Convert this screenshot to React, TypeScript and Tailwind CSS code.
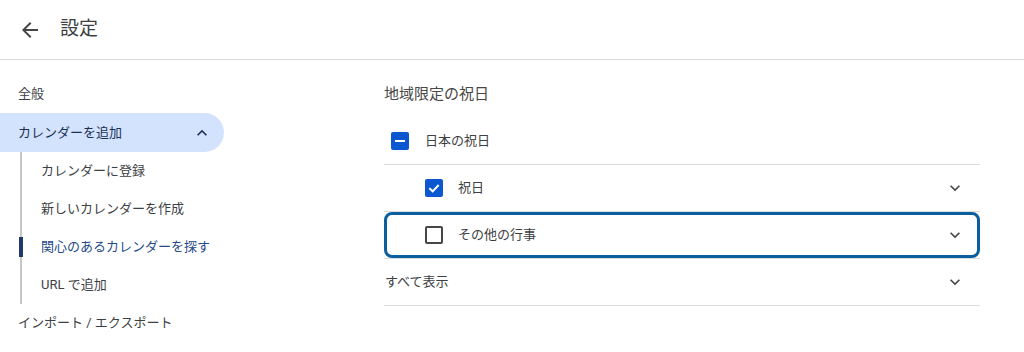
import { ReactNode } from "react"

const font = { fontFamily: 'Roboto, "Noto Sans CJK JP", sans-serif' }

function ExpandMore({ className = "" }: { className?: string }) {
  return (
    <svg viewBox="0 0 24 24" className={className} fill="currentColor">
      <path d="M16.59 8.59L12 13.17 7.41 8.59 6 10l6 6 6-6z" />
    </svg>
  )
}

function ExpandLess({ className = "" }: { className?: string }) {
  return (
    <svg viewBox="0 0 24 24" className={className} fill="currentColor">
      <path d="M12 8l-6 6 1.41 1.41L12 10.83l4.59 4.58L18 14z" />
    </svg>
  )
}

function Checkbox({ state }: { state: "checked" | "mixed" | "empty" }) {
  if (state === "empty") {
    return <div className="w-[18px] h-[18px] rounded-[2px] border-2 border-[#444746]" />
  }
  return (
    <div className="w-[18px] h-[18px] rounded-[2px] bg-[#0b57d0] flex items-center justify-center">
      {state === "mixed" ? (
        <div className="w-[10px] h-[2px] bg-white" />
      ) : (
        <svg viewBox="0 0 24 24" className="w-[16px] h-[16px]" fill="none" stroke="white" strokeWidth="3">
          <polyline points="5 12.5 10 17 19 7.5" />
        </svg>
      )}
    </div>
  )
}

function SubItem({ label, active = false }: { label: string; active?: boolean }) {
  return (
    <div className="h-[38px] flex items-center">
      <div className={`-ml-[3px] w-[4px] h-[20px] ${active ? "bg-[#1e3a6b]" : "bg-transparent"}`} />
      <span className={`ml-[18px] text-[13px] ${active ? "text-[#254a87]" : "text-[#3c4043]"}`}>{label}</span>
    </div>
  )
}

function Row({ children, chevron = true }: { children: ReactNode; chevron?: boolean }) {
  return (
    <div className="h-[47px] border-b border-[#dadce0] flex items-center justify-between">
      <div className="flex items-center">{children}</div>
      {chevron && <ExpandMore className="w-[20px] h-[20px] mr-[15px] text-[#444746]" />}
    </div>
  )
}

export default function App() {
  return (
    <div className="w-[1024px] h-[352px] bg-white overflow-hidden" style={font}>
      {/* Header */}
      <div className="h-[60px] border-b border-[#dadce0] flex items-center">
        <svg viewBox="0 0 24 24" className="ml-[18px] w-[24px] h-[24px] text-[#444746]" fill="currentColor">
          <path d="M20 11H7.83l5.59-5.59L12 4l-8 8 8 8 1.41-1.41L7.83 13H20v-2z" />
        </svg>
        <span className="ml-[18px] text-[19px] text-[#3c4043]">設定</span>
      </div>

      <div className="flex">
        {/* Sidebar */}
        <div className="w-[224px] pt-[15px]">
          <div className="h-[38px] flex items-center pl-[18px] text-[13px] text-[#3c4043]">全般</div>
          <div className="h-[39px] flex items-center justify-between pl-[18px] pr-[12px] bg-[#d3e3fd] rounded-r-full text-[13px] text-[#1b2f57]">
            <span>カレンダーを追加</span>
            <ExpandLess className="w-[20px] h-[20px] text-[#1b2f57]" />
          </div>
          <div className="ml-[20px] mt-[10px] mb-[11px] border-l-2 border-[#c4c7c5]">
            <div className="-mt-[10px] -mb-[11px]">
              <SubItem label="カレンダーに登録" />
              <SubItem label="新しいカレンダーを作成" />
              <SubItem label="関心のあるカレンダーを探す" active />
              <SubItem label="URL で追加" />
            </div>
          </div>
          <div className="h-[38px] flex items-center pl-[18px] text-[13px] text-[#3c4043]">インポート / エクスポート</div>
        </div>

        {/* Main */}
        <div className="ml-[160px] w-[596px] pt-[22px]">
          <div className="h-[24px] flex items-center text-[15px] text-[#474747]">地域限定の祝日</div>
          <div className="mt-[12px]">
            <Row chevron={false}>
              <div className="ml-[7px]"><Checkbox state="mixed" /></div>
              <span className="ml-[16px] text-[13px] text-[#3c4043]">日本の祝日</span>
            </Row>
            <Row>
              <div className="ml-[41px]"><Checkbox state="checked" /></div>
              <span className="ml-[15px] text-[13px] text-[#3c4043]">祝日</span>
            </Row>
            <div className="h-[47px] border-b border-[#dadce0]">
              <div className="h-[46px] rounded-[8px] border-[3px] border-[#0b5f9e] flex items-center justify-between">
                <div className="flex items-center">
                  <div className="ml-[38px]"><Checkbox state="empty" /></div>
                  <span className="ml-[15px] text-[13px] text-[#3c4043]">その他の行事</span>
                </div>
                <ExpandMore className="w-[20px] h-[20px] mr-[12px] text-[#444746]" />
              </div>
            </div>
            <Row>
              <span className="ml-[1px] text-[13px] text-[#3c4043]">すべて表示</span>
            </Row>
          </div>
        </div>
      </div>
    </div>
  )
}
